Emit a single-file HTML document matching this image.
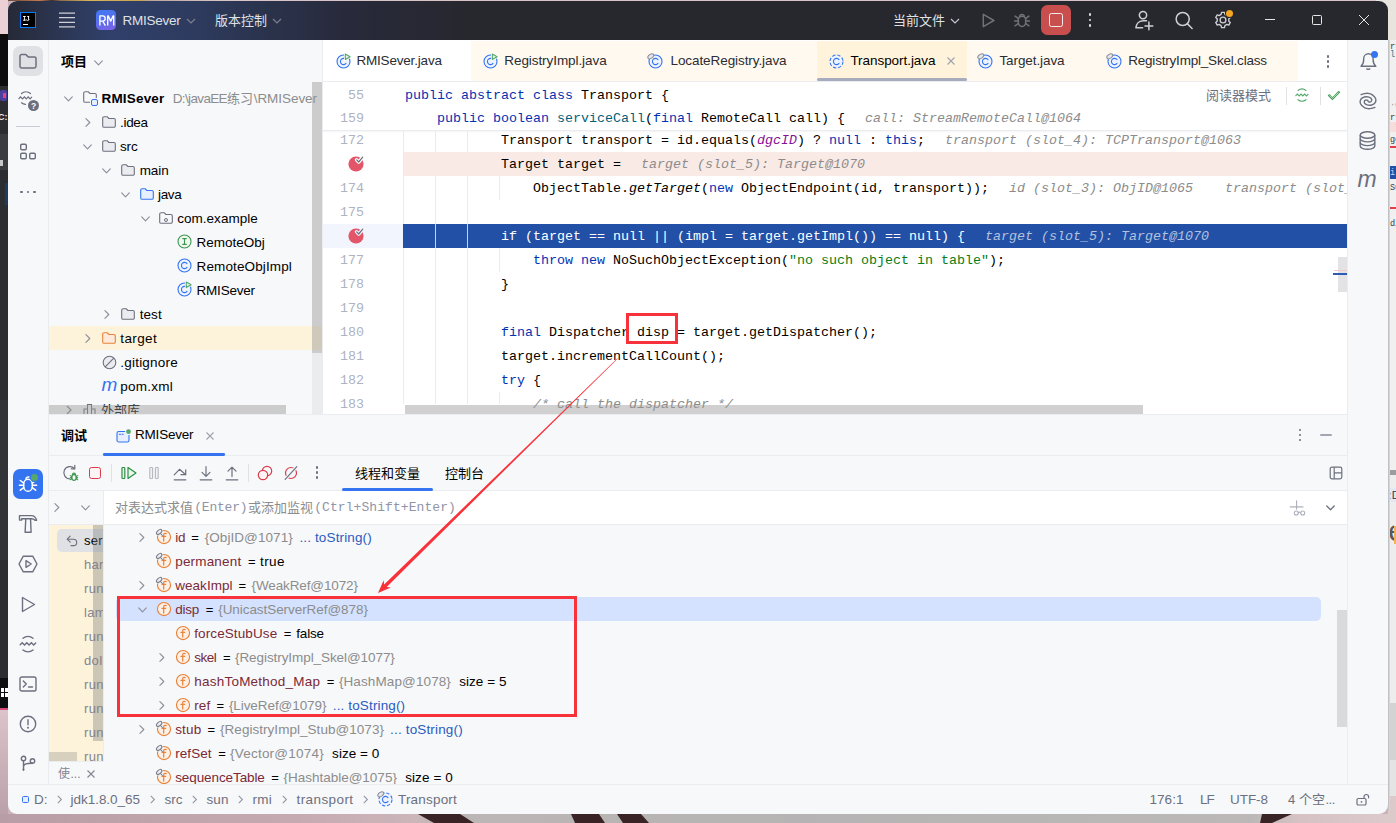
<!DOCTYPE html>
<html><head><meta charset="utf-8">
<title>RMISever - Transport.java</title>
<style>
*{box-sizing:border-box;margin:0;padding:0}
html,body{width:1396px;height:823px;overflow:hidden}
body{position:relative;background:#c9b2b8;font-family:"Liberation Sans","Noto Sans CJK SC",sans-serif;font-size:13px;color:#000}
.abs{position:absolute}
svg{overflow:visible}
.t{position:absolute;white-space:pre}
.ui{font-family:"Liberation Sans","Noto Sans CJK SC",sans-serif;font-size:13px}
.b{font-weight:bold}
.mono{font-family:"Liberation Mono",monospace;font-size:13.333px}
.kw{color:#0033b3}.fn{color:#00627a}.hint{color:#8c8c8c;font-style:italic}.str{color:#067d17}.fld{color:#871094;font-style:italic}.cm{color:#8c8c8c;font-style:italic}.it{font-style:italic}
.vn{color:#7a2a37}.gv{color:#8c8c8c}.lk{color:#2a5bc0}
svg text{font-family:"Liberation Sans","Noto Sans CJK SC",sans-serif}
</style></head><body>

<!-- s_title -->
<div class="abs" style="left:0px;top:0px;width:1396px;height:1px;background:linear-gradient(90deg,#e9cdd2 0,#e9cdd2 8px,#6b4a3a 8px,#c5784f 40px,#3a3230 52px,#8a6a4a 60px,#d9b45a 90px,#caa24f 140px,#b9a59a 150px,#d8c4c6 220px,#d8c4c6 100%);"></div>
<div class="abs" style="left:0px;top:0px;width:8px;height:34px;background:#ebd0d5;"></div>
<div class="abs" style="left:0px;top:34px;width:8px;height:52px;background:#0c0c0e;"></div>
<div class="abs" style="left:0px;top:86px;width:8px;height:592px;background:#2b2d30;"></div>
<div class="abs" style="left:0px;top:134px;width:8px;height:36px;background:#3a3c40;"></div>
<div class="abs" style="left:0px;top:90px;width:7px;height:11px;background:#4b3fa0;border-radius:2px;"></div>
<div class="abs" style="left:3px;top:93px;width:3px;height:5px;background:#e0457b;"></div>
<div class="t ui b" style="left:-2px;top:111.5px;height:10px;line-height:10px;color:#e8e8e8;font-size:9px;">C:</div>
<div class="abs" style="left:0px;top:160px;width:3px;height:6px;background:#c8c8c8;"></div>
<div class="abs" style="left:5px;top:183px;width:3px;height:22px;background:#1f3a5f;"></div>
<div class="abs" style="left:0px;top:400px;width:8px;height:160px;background:#313336;"></div>
<div class="abs" style="left:0px;top:678px;width:8px;height:30px;background:#0e0e10;"></div>
<div class="abs" style="left:1px;top:688px;width:3px;height:4px;background:#fff;"></div>
<div class="abs" style="left:5px;top:688px;width:3px;height:4px;background:#fff;"></div>
<div class="abs" style="left:1px;top:693px;width:3px;height:4px;background:#fff;"></div>
<div class="abs" style="left:5px;top:693px;width:3px;height:4px;background:#fff;"></div>
<div class="abs" style="left:0px;top:708px;width:8px;height:2px;background:#d94a7c;"></div>
<div class="abs" style="left:0px;top:710px;width:8px;height:113px;background:linear-gradient(180deg,#dcc4ca,#b89da6);"></div>
<div class="abs" style="left:0px;top:814px;width:1396px;height:9px;background:linear-gradient(90deg,#b89da6 0,#c5aab1 300px,#ccb6ba 415px,#bdb6b6 440px,#b5b3b3 800px,#bcb8b8 1250px,#d6c2c5 1300px,#dccacc 100%);"></div>
<svg class="abs" style="left:0;top:814px" width="1396" height="9" viewBox="0 0 1396 9"><g fill="#3a2325"><path d="M418 0h42l14 9h-40z"/><path d="M571 0h28l6 9h-30z"/><path d="M617 0h24l8 9h-26z"/><path d="M1262 0h30l-20 9h-12z"/></g></svg>
<div class="abs" style="left:1376px;top:0px;width:20px;height:14px;background:#e8e4de;"></div>
<div class="abs" style="left:8px;top:1px;width:1380px;height:813px;background:#f7f8fa;border-radius:9px;"></div>
<div class="abs" style="left:8px;top:1px;width:1380px;height:39px;background:linear-gradient(90deg,#262a37 0px,#2c3653 52px,#30406b 100px,#2e3b5f 185px,#2a324a 265px,#28293a 345px,#27282e 460px,#27282e 100%);border-radius:9px 9px 0 0;"></div>
<div class="abs" style="left:20px;top:12px;width:16px;height:16px;background:#000;border:1px solid #087cfa;"></div>
<svg class="abs" style="left:23.0px;top:15.5px;" width="7" height="5" viewBox="0 0 7 5" fill="none"><g fill="#fff"><rect x="0" y="0" width="2.800" height="0.900"/><rect x="0.950" y="0" width="0.900" height="4.600"/><rect x="0" y="3.700" width="2.800" height="0.900"/><rect x="4.200" y="0" width="2" height="0.900"/><rect x="5.100" y="0" width="0.900" height="3.800"/><path d="M3.200 3.300c.2.900.7 1.300 1.400 1.300.9 0 1.400-.6 1.400-1.500" stroke="#fff" stroke-width="0.900" fill="none"/></g></svg>
<div class="abs" style="left:23px;top:24px;width:5px;height:1px;background:#fff;"></div>
<svg class="abs" style="left:59.0px;top:12.0px;" width="16" height="16" viewBox="0 0 16 16" fill="none"><path d="M0 1.100h16M0 5.700h16M0 10.300h16M0 14.900h16" stroke="#ced0d6" stroke-width="1.250"/></svg>
<div class="abs" style="left:96px;top:10px;width:20px;height:20px;background:linear-gradient(160deg,#3d7af2 0%,#5a6eee 50%,#8062e6 100%);border-radius:4.500px;"></div>
<svg class="abs" style="left:98.5px;top:14.7px;" width="15" height="11" viewBox="0 0 15 11" fill="none"><g stroke="#fff" stroke-width="1.350" fill="none" stroke-linejoin="round" stroke-linecap="butt"><path d="M0.900 10.600V0.900h2.700c1.700 0 2.600 1 2.600 2.600s-.9 2.600-2.600 2.600H0.900M3.700 6.200l2.700 4.400"/><path d="M8.700 10.600V0.900h.5l2.500 5.200L14.200 0.900h.5v9.700"/></g></svg>
<div class="t ui" style="left:122.4px;top:12.6px;height:16px;line-height:16px;color:#dfe1e5;font-size:13.5px;letter-spacing:-0.227px;">RMISever</div>
<svg class="abs" style="left:186.0px;top:17.5px;" width="10" height="6" viewBox="0 0 10 6" fill="none"><path d="M1 1l4 4 4-4" stroke="#7c808c" stroke-width="1.2"/></svg>
<svg class="abs" style="left:215px;top:25.14px;" width="52.0" height="1" viewBox="0 0 52.0 1"><text x="0" y="0" font-size="13" fill="#dfe1e5">版本控制</text></svg>
<svg class="abs" style="left:272.0px;top:17.5px;" width="10" height="6" viewBox="0 0 10 6" fill="none"><path d="M1 1l4 4 4-4" stroke="#7c808c" stroke-width="1.2"/></svg>
<svg class="abs" style="left:893.4px;top:25.14px;" width="52.0" height="1" viewBox="0 0 52.0 1"><text x="0" y="0" font-size="13" fill="#dfe1e5">当前文件</text></svg>
<svg class="abs" style="left:950.0px;top:18.0px;" width="10" height="6" viewBox="0 0 10 6" fill="none"><path d="M1 1l4 4 4-4" stroke="#c3c5cb" stroke-width="1.2"/></svg>
<svg class="abs" style="left:982.0px;top:12.5px;" width="13" height="15" viewBox="0 0 13 15" fill="none"><path d="M1.300 1.300v12.400l10.600-6.200z" stroke="#6e7178" stroke-width="1.450" stroke-linejoin="round" fill="none"/></svg>
<svg class="abs" style="left:1014.0px;top:12.0px;" width="16" height="16" viewBox="0 0 16 16" fill="none"><g stroke="#6e7178" stroke-width="1.550" stroke-linecap="round" fill="none"><rect x="4.300" y="4.200" width="7.400" height="10.200" rx="3.600" ry="3.900"/><path d="M5.600 4.200a2.500 2.500 0 0 1 4.800 0"/><path d="M4.200 6.400L1.100 4.100M3.900 8.900H.6M4.200 11.500l-3.100 2.300M11.800 6.400l3.100-2.300M12.100 8.900h3.300M11.800 11.500l3.100 2.300"/></g></svg>
<div class="abs" style="left:1041px;top:5px;width:30px;height:30px;background:#c94f4f;border-radius:6.500px;"></div>
<div class="abs" style="left:1049.2px;top:13.2px;width:13.6px;height:13.6px;background:transparent;border:1.700px solid #f6ebeb;border-radius:2.400px;"></div>
<div class="abs" style="left:1088.7px;top:13.399999999999999px;width:2.6px;height:2.6px;background:#dfe1e5;border-radius:50%;"></div>
<div class="abs" style="left:1088.7px;top:18.7px;width:2.6px;height:2.6px;background:#dfe1e5;border-radius:50%;"></div>
<div class="abs" style="left:1088.7px;top:24.099999999999998px;width:2.6px;height:2.6px;background:#dfe1e5;border-radius:50%;"></div>
<svg class="abs" style="left:1135.0px;top:11.0px;" width="18" height="18" viewBox="0 0 18 18" fill="none"><g stroke="#ced0d6" stroke-width="1.500" stroke-linecap="round" fill="none"><circle cx="8" cy="4.100" r="3.650"/><path d="M0.900 16.850C1.300 13.500 3.500 9.800 8 9.800H11.500M0.900 16.850H7.600"/><path d="M13.900 11v7.800M10 14.900h7.800"/></g></svg>
<svg class="abs" style="left:1174.5px;top:11.0px;" width="18" height="18" viewBox="0 0 18 18" fill="none"><g stroke="#ced0d6" stroke-width="1.500" stroke-linecap="round" fill="none"><circle cx="7.700" cy="8" r="6.550"/><path d="M12.500 12.900l4.600 4.600"/></g></svg>
<svg class="abs" style="left:1214.0px;top:11.0px;" width="18" height="18" viewBox="0 0 18 18" fill="none"><g stroke="#ced0d6" stroke-width="1.350" stroke-linejoin="round" fill="none"><path d="M10.92 3.42L10.47 1.44L7.53 1.44L7.08 3.42L5.13 4.55L3.19 3.95L1.72 6.49L3.21 7.87L3.21 10.13L1.72 11.51L3.19 14.05L5.13 13.45L7.08 14.58L7.53 16.56L10.47 16.56L10.92 14.58L12.87 13.45L14.81 14.05L16.28 11.51L14.79 10.13L14.79 7.87L16.28 6.49L14.81 3.95L12.87 4.55Z"/><circle cx="9" cy="9" r="2.900"/></g></svg>
<div class="abs" style="left:1224.7px;top:8.7px;width:9.4px;height:9.4px;background:#27282e;border-radius:50%;"></div>
<div class="abs" style="left:1225.7px;top:9.7px;width:7.4px;height:7.4px;background:#f5a623;border-radius:50%;"></div>
<div class="abs" style="left:1265px;top:19px;width:10px;height:1px;background:#e6e6e6;"></div>
<div class="abs" style="left:1312px;top:15px;width:10px;height:10px;background:transparent;border:1px solid #e6e6e6;border-radius:1.5px;"></div>
<svg class="abs" style="left:1359.0px;top:15.0px;" width="10" height="10" viewBox="0 0 10 10" fill="none"><path d="M0 0l10 10M10 0L0 10" stroke="#e6e6e6" stroke-width="1"/></svg>
<!-- s_left -->
<div class="abs" style="left:48px;top:40px;width:1px;height:744px;background:#ebecf0;"></div>
<div class="abs" style="left:13px;top:46px;width:30px;height:30px;background:#dfe1e5;border-radius:7px;"></div>
<svg class="abs" style="left:18.0px;top:53.0px;" width="20" height="16" viewBox="0 0 20 16" fill="none"><path d="M2 3.2a1.7 1.7 0 0 1 1.7-1.7h4.1l2.4 2.4h6.1a1.7 1.7 0 0 1 1.7 1.7v7.7a1.7 1.7 0 0 1-1.7 1.7H3.7A1.7 1.7 0 0 1 2 13.3z" stroke="#6c707e" stroke-width="1.5" stroke-linejoin="round"/></svg>
<svg class="abs" style="left:18.0px;top:90.0px;" width="18" height="16" viewBox="0 0 18 16" fill="none"><g stroke="#6c707e" stroke-width="1.2" stroke-linecap="round"><path d="M3.5 3.5a7 7 0 0 1 9 0"/><path d="M1 8.5l1.6-1.6 1.9 1.9 1.9-1.9 1.9 1.9 1.9-1.9 1.9 1.9 1.6-1.6"/><path d="M3.5 12.8a7 7 0 0 0 4 1.6"/></g></svg>
<div class="abs" style="left:28px;top:100.3px;width:11px;height:11px;background:#6c707e;border-radius:50%;"></div>
<div class="t ui b" style="left:31.1px;top:101.0px;height:10px;line-height:10px;color:#fff;font-size:8.5px;">?</div>
<div class="abs" style="left:16px;top:126px;width:24px;height:1px;background:#c9ccd6;"></div>
<svg class="abs" style="left:19.0px;top:143.0px;" width="18" height="18" viewBox="0 0 18 18" fill="none"><g stroke="#6c707e" stroke-width="1.4"><rect x="1.7" y="1.2" width="5.6" height="5.6" rx="1.2"/><rect x="1.7" y="10.2" width="5.6" height="5.6" rx="1.2"/><rect x="10.7" y="10.2" width="5.6" height="5.6" rx="1.2"/></g></svg>
<div class="abs" style="left:20.3px;top:190.8px;width:2.6px;height:2.6px;background:#6c707e;border-radius:50%;"></div>
<div class="abs" style="left:26.7px;top:190.8px;width:2.6px;height:2.6px;background:#6c707e;border-radius:50%;"></div>
<div class="abs" style="left:33.1px;top:190.8px;width:2.6px;height:2.6px;background:#6c707e;border-radius:50%;"></div>
<div class="abs" style="left:13px;top:469px;width:30px;height:30px;background:#3574f0;border-radius:7px;"></div>
<svg class="abs" style="left:19.0px;top:476.0px;" width="18" height="18" viewBox="0 0 18 18" fill="none"><g stroke="#fff" stroke-width="1.500" stroke-linecap="round" fill="none"><rect x="4.700" y="3.300" width="8.600" height="12" rx="4.300" ry="4.900"/><path d="M6.900 3.200c.2-1.600 1.400-2.400 3-2.200"/><path d="M4.700 7.200L1.300 4.500M4.600 9.200H.4M4.700 11.600l-3.400 2.600M13.300 7.200l3.400-2.700M13.400 9.200h4.200M13.300 11.600l3.400 2.600"/></g></svg>
<div class="abs" style="left:30.2px;top:473.2px;width:8.6px;height:8.6px;background:#3574f0;border-radius:50%;"></div>
<div class="abs" style="left:31px;top:474px;width:7px;height:7px;background:#55a76a;border-radius:50%;"></div>
<svg class="abs" style="left:18.0px;top:514.0px;" width="20" height="20" viewBox="0 0 20 20" fill="none"><g stroke="#6c707e" stroke-width="1.400" stroke-linejoin="round" fill="none"><path d="M1.500 1.600H13.300C16 1.600 17.900 3.700 18.600 6.300L17 6.200C16.100 5.200 15 4.700 13.500 4.700H3.700V6.100H1.500Z"/><path d="M7.700 5v1.500L7.100 18.300h6l-.5-11.800V5"/></g></svg>
<svg class="abs" style="left:18.0px;top:555.0px;" width="20" height="18" viewBox="0 0 20 18" fill="none"><g stroke="#6c707e" stroke-width="1.4" stroke-linejoin="round"><path d="M5.3 1.2h9.400L19 9l-4.300 7.800H5.300L1 9z"/><path d="M8 5.700v6.600L13.200 9z"/></g></svg>
<svg class="abs" style="left:21.0px;top:595.5px;" width="15" height="17" viewBox="0 0 15 17" fill="none"><path d="M1.5 1.500v14l12-7z" stroke="#6c707e" stroke-width="1.4" stroke-linejoin="round"/></svg>
<svg class="abs" style="left:19.0px;top:635.0px;" width="18" height="18" viewBox="0 0 18 18" fill="none"><g stroke="#6c707e" stroke-width="1.4" stroke-linecap="round"><path d="M4 3.200a8 8 0 0 1 10 0"/><path d="M1.200 9.800l2-2 2.300 2.300 2.300-2.300 2.300 2.300 2.300-2.300 2.300 2.300 2-2"/><path d="M4 15a8 8 0 0 0 10 0"/></g></svg>
<svg class="abs" style="left:19.0px;top:676.0px;" width="18" height="16" viewBox="0 0 18 16" fill="none"><g stroke="#6c707e" stroke-width="1.400" stroke-linecap="round" stroke-linejoin="round"><rect x="1" y="1" width="16" height="14" rx="1.800"/><path d="M4.300 5l3 3-3 3M9.500 11h4"/></g></svg>
<svg class="abs" style="left:19.0px;top:715.0px;" width="18" height="18" viewBox="0 0 18 18" fill="none"><g stroke="#6c707e" stroke-width="1.400" stroke-linecap="round"><circle cx="9" cy="9" r="7.700"/><path d="M9 4.800v5"/></g><circle cx="9" cy="12.800" r="1" fill="#6c707e"/></svg>
<svg class="abs" style="left:19.0px;top:755.0px;" width="18" height="18" viewBox="0 0 18 18" fill="none"><g stroke="#6c707e" stroke-width="1.400" stroke-linecap="round"><circle cx="4.500" cy="3.500" r="2.200"/><circle cx="13.500" cy="6" r="2.200"/><circle cx="4.500" cy="14.500" r="0.300"/><path d="M4.500 5.700v9.500M4.500 12c0-2.500 2-3.300 4.500-3.500 2.500-.2 4.500-.3 4.500-.3"/></g></svg>
<!-- s_project -->
<svg class="abs" style="left:61px;top:66.44px;" width="26.0" height="1" viewBox="0 0 26.0 1"><text x="0" y="0" font-size="13" font-weight="bold" fill="#000">项目</text></svg>
<svg class="abs" style="left:93.5px;top:59.5px;" width="9" height="6" viewBox="0 0 9 6" fill="none"><path d="M0.700 0.900l3.800 3.900 3.800-3.900" stroke="#8d909c" stroke-width="1.150" stroke-linecap="round" stroke-linejoin="round"/></svg>
<div class="abs" style="left:49px;top:326px;width:274px;height:24px;background:#fdf3da;"></div>
<svg class="abs" style="left:64.3px;top:95.5px;" width="9" height="6" viewBox="0 0 9 6" fill="none"><path d="M0.700 0.900l3.800 3.900 3.800-3.900" stroke="#8d909c" stroke-width="1.150" stroke-linecap="round" stroke-linejoin="round"/></svg>
<svg class="abs" style="left:82.5px;top:91.2px;" width="14" height="12" viewBox="0 0 14 12" fill="none"><path d="M.7 2.100A1.400 1.400 0 0 1 2.100.7h3l1.800 1.800h5a1.400 1.400 0 0 1 1.400 1.400v6a1.400 1.400 0 0 1-1.400 1.400H2.100a1.400 1.400 0 0 1-1.400-1.400z" stroke="#6c707e" fill="#f7f8fa" stroke-width="1.100" stroke-linejoin="round"/></svg>
<div class="abs" style="left:90px;top:98px;width:8.5px;height:8.5px;background:#f7f8fa;"></div>
<div class="abs" style="left:91px;top:99px;width:7.2px;height:7px;background:#e7efff;border:1.200px solid #3574f0;border-radius:2px;"></div>
<div class="t ui b" style="left:101.5px;top:90.6px;height:16px;line-height:16px;color:#000;font-size:13.5px;letter-spacing:0.184px;">RMISever</div>
<div class="abs" style="left:49px;top:86px;width:273px;height:24px;overflow:hidden"><div class="abs" style="left:-49px;top:-86px;width:400px;height:200px"><div class="t ui" style="left:172.7px;top:90.6px;height:16px;line-height:16px;color:#8c8c8c;font-size:13.5px;letter-spacing:-0.636px;">D:\javaEE</div><svg class="abs" style="left:227.2px;top:103.24px;" width="26.0" height="1" viewBox="0 0 26.0 1"><text x="0" y="0" font-size="13" fill="#8c8c8c">练习</text></svg><div class="t ui" style="left:253.7px;top:90.6px;height:16px;line-height:16px;color:#8c8c8c;font-size:13.5px;letter-spacing:-0.052px;">\RMISever</div></div></div>
<svg class="abs" style="left:84.7px;top:117.5px;" width="6" height="9" viewBox="0 0 6 9" fill="none"><path d="M0.900 0.700l3.900 3.800-3.900 3.800" stroke="#8d909c" stroke-width="1.150" stroke-linecap="round" stroke-linejoin="round"/></svg>
<svg class="abs" style="left:101.8px;top:115.7px;" width="14" height="12" viewBox="0 0 14 12" fill="none"><path d="M.7 2.100A1.400 1.400 0 0 1 2.100.7h3l1.800 1.800h5a1.400 1.400 0 0 1 1.400 1.400v6a1.400 1.400 0 0 1-1.400 1.400H2.100a1.400 1.400 0 0 1-1.400-1.400z" stroke="#6c707e" fill="#ebecf0" stroke-width="1.100" stroke-linejoin="round"/></svg>
<div class="t ui" style="left:120px;top:114.6px;height:16px;line-height:16px;font-size:13.5px;letter-spacing:-0.295px;">.idea</div>
<svg class="abs" style="left:83.2px;top:143.5px;" width="9" height="6" viewBox="0 0 9 6" fill="none"><path d="M0.700 0.900l3.800 3.900 3.800-3.900" stroke="#8d909c" stroke-width="1.150" stroke-linecap="round" stroke-linejoin="round"/></svg>
<svg class="abs" style="left:101.8px;top:139.7px;" width="14" height="12" viewBox="0 0 14 12" fill="none"><path d="M.7 2.100A1.400 1.400 0 0 1 2.100.7h3l1.800 1.800h5a1.400 1.400 0 0 1 1.400 1.400v6a1.400 1.400 0 0 1-1.400 1.400H2.100a1.400 1.400 0 0 1-1.400-1.400z" stroke="#6c707e" fill="#ebecf0" stroke-width="1.100" stroke-linejoin="round"/></svg>
<div class="t ui" style="left:120px;top:138.6px;height:16px;line-height:16px;font-size:13.5px;letter-spacing:-0.132px;">src</div>
<svg class="abs" style="left:102.4px;top:167.5px;" width="9" height="6" viewBox="0 0 9 6" fill="none"><path d="M0.700 0.900l3.800 3.900 3.800-3.900" stroke="#8d909c" stroke-width="1.150" stroke-linecap="round" stroke-linejoin="round"/></svg>
<svg class="abs" style="left:121.0px;top:163.7px;" width="14" height="12" viewBox="0 0 14 12" fill="none"><path d="M.7 2.100A1.400 1.400 0 0 1 2.100.7h3l1.800 1.800h5a1.400 1.400 0 0 1 1.400 1.400v6a1.400 1.400 0 0 1-1.400 1.400H2.100a1.400 1.400 0 0 1-1.400-1.400z" stroke="#6c707e" fill="#ebecf0" stroke-width="1.100" stroke-linejoin="round"/></svg>
<div class="t ui" style="left:139.7px;top:162.6px;height:16px;line-height:16px;font-size:13.5px;letter-spacing:-0.091px;">main</div>
<svg class="abs" style="left:121.4px;top:191.5px;" width="9" height="6" viewBox="0 0 9 6" fill="none"><path d="M0.700 0.900l3.800 3.900 3.800-3.900" stroke="#8d909c" stroke-width="1.150" stroke-linecap="round" stroke-linejoin="round"/></svg>
<svg class="abs" style="left:140.0px;top:187.7px;" width="14" height="12" viewBox="0 0 14 12" fill="none"><path d="M.7 2.100A1.400 1.400 0 0 1 2.100.7h3l1.800 1.800h5a1.400 1.400 0 0 1 1.400 1.400v6a1.400 1.400 0 0 1-1.400 1.400H2.100a1.400 1.400 0 0 1-1.400-1.400z" stroke="#3574f0" fill="#e7efff" stroke-width="1.100" stroke-linejoin="round"/></svg>
<div class="t ui" style="left:158px;top:186.6px;height:16px;line-height:16px;font-size:13.5px;letter-spacing:-0.317px;">java</div>
<svg class="abs" style="left:140.5px;top:215.5px;" width="9" height="6" viewBox="0 0 9 6" fill="none"><path d="M0.700 0.900l3.800 3.900 3.800-3.900" stroke="#8d909c" stroke-width="1.150" stroke-linecap="round" stroke-linejoin="round"/></svg>
<svg class="abs" style="left:159.2px;top:211.7px;" width="14" height="12" viewBox="0 0 14 12" fill="none"><path d="M.7 2.100A1.400 1.400 0 0 1 2.100.7h3l1.800 1.800h5a1.400 1.400 0 0 1 1.400 1.400v6a1.400 1.400 0 0 1-1.400 1.400H2.100a1.400 1.400 0 0 1-1.400-1.400z" stroke="#6c707e" fill="#f7f8fa" stroke-width="1.100" stroke-linejoin="round"/></svg>
<div class="abs" style="left:164px;top:217.5px;width:4px;height:4px;background:transparent;border:1.100px solid #6c707e;border-radius:50%;"></div>
<div class="t ui" style="left:177.3px;top:210.6px;height:16px;line-height:16px;font-size:13.5px;letter-spacing:0.011px;">com.example</div>
<svg class="abs" style="left:177.0px;top:234.0px;" width="15" height="15" viewBox="0 0 15 15" fill="none"><circle cx="7.500" cy="7.500" r="6.500" stroke="#3f9651" fill="#eef8ef" stroke-width="1.100"/><path d="M5.700 4.600h3.600M5.700 10.400h3.600M7.500 4.600v5.800" stroke="#3f9651" stroke-width="1.100" stroke-linecap="round"/></svg>
<div class="t ui" style="left:196.5px;top:234.6px;height:16px;line-height:16px;font-size:13.5px;letter-spacing:0.002px;">RemoteObj</div>
<svg class="abs" style="left:177.0px;top:258.0px;" width="15" height="15" viewBox="0 0 15 15" fill="none"><circle cx="7.500" cy="7.500" r="6.500" stroke="#3574f0" fill="#edf3ff" stroke-width="1.100"/><path d="M10 5.600a3.100 3.100 0 1 0 0 3.800" stroke="#3574f0" stroke-width="1.100" stroke-linecap="round" fill="none"/></svg>
<div class="t ui" style="left:196.5px;top:258.6px;height:16px;line-height:16px;font-size:13.5px;letter-spacing:0.132px;">RemoteObjImpl</div>
<svg class="abs" style="left:177.0px;top:282.0px;" width="15" height="15" viewBox="0 0 15 15" fill="none"><circle cx="7.500" cy="7.500" r="6.500" stroke="#3574f0" fill="#edf3ff" stroke-width="1.100"/><path d="M10 5.600a3.100 3.100 0 1 0 0 3.800" stroke="#3574f0" stroke-width="1.100" stroke-linecap="round" fill="none"/><path d="M8.800 -0.800v7.200l6.200-3.600z" fill="#f7f8fa" stroke="#f7f8fa" stroke-width="1.600" stroke-linejoin="round"/><path d="M9.300 0v5.600l4.800-2.800z" fill="#e4f5e7" stroke="#55a76a" stroke-width="1.100" stroke-linejoin="round"/></svg>
<div class="t ui" style="left:196.5px;top:282.6px;height:16px;line-height:16px;font-size:13.5px;letter-spacing:-0.202px;">RMISever</div>
<svg class="abs" style="left:103.9px;top:309.5px;" width="6" height="9" viewBox="0 0 6 9" fill="none"><path d="M0.900 0.700l3.900 3.800-3.900 3.800" stroke="#8d909c" stroke-width="1.150" stroke-linecap="round" stroke-linejoin="round"/></svg>
<svg class="abs" style="left:121.0px;top:307.7px;" width="14" height="12" viewBox="0 0 14 12" fill="none"><path d="M.7 2.100A1.400 1.400 0 0 1 2.100.7h3l1.800 1.800h5a1.400 1.400 0 0 1 1.400 1.400v6a1.400 1.400 0 0 1-1.400 1.400H2.100a1.400 1.400 0 0 1-1.400-1.400z" stroke="#6c707e" fill="#ebecf0" stroke-width="1.100" stroke-linejoin="round"/></svg>
<div class="t ui" style="left:139.7px;top:306.6px;height:16px;line-height:16px;font-size:13.5px;letter-spacing:0.060px;">test</div>
<svg class="abs" style="left:84.7px;top:333.5px;" width="6" height="9" viewBox="0 0 6 9" fill="none"><path d="M0.900 0.700l3.900 3.800-3.900 3.800" stroke="#8d909c" stroke-width="1.150" stroke-linecap="round" stroke-linejoin="round"/></svg>
<svg class="abs" style="left:101.8px;top:331.7px;" width="14" height="12" viewBox="0 0 14 12" fill="none"><path d="M.7 2.100A1.400 1.400 0 0 1 2.100.7h3l1.800 1.800h5a1.400 1.400 0 0 1 1.400 1.400v6a1.400 1.400 0 0 1-1.400 1.400H2.100a1.400 1.400 0 0 1-1.400-1.400z" stroke="#e8833a" fill="#fdeadb" stroke-width="1.100" stroke-linejoin="round"/></svg>
<div class="t ui" style="left:120.3px;top:330.6px;height:16px;line-height:16px;font-size:13.5px;letter-spacing:0.363px;">target</div>
<svg class="abs" style="left:101.7px;top:354.5px;" width="15" height="15" viewBox="0 0 15 15" fill="none"><circle cx="7.500" cy="7.500" r="6.300" stroke="#6c707e" fill="#ebecf0" stroke-width="1.100"/><path d="M3.200 11.800l8.600-8.600" stroke="#6c707e" stroke-width="1.100"/></svg>
<div class="t ui" style="left:120.3px;top:354.6px;height:16px;line-height:16px;font-size:13.5px;letter-spacing:0.206px;">.gitignore</div>
<div class="t ui" style="left:101.5px;top:375.0px;height:20px;line-height:20px;color:#3574f0;font-style:italic;font-size:19px;font-family:'Liberation Sans',sans-serif;">m</div>
<div class="t ui" style="left:120.3px;top:378.6px;height:16px;line-height:16px;font-size:13.5px;letter-spacing:0.227px;">pom.xml</div>
<div class="abs" style="left:49px;top:398px;width:263px;height:16px;overflow:hidden"><svg class="abs" style="left:17px;top:7px" width="6" height="10" viewBox="0 0 6 10" fill="none"><path d="M1 1l4 4-4 4" stroke="#818594" stroke-width="1.200"/></svg><svg class="abs" style="left:34px;top:5px" width="14" height="14" viewBox="0 0 14 14" fill="none"><path d="M1 13V6h3.500v7M4.500 13V1.500h4V13M8.500 13V6H12v7M0 13h14" stroke="#6c707e" stroke-width="1.100"/></svg><svg class="abs" style="left:52px;top:17.24px;" width="39.0" height="1" viewBox="0 0 39.0 1"><text x="0" y="0" font-size="13" fill="#000">外部库</text></svg></div>
<div class="abs" style="left:312px;top:82px;width:11px;height:271px;background:rgba(150,150,150,0.45);"></div>
<div class="abs" style="left:312px;top:353px;width:11px;height:61px;background:rgba(200,200,205,0.25);"></div>
<div class="abs" style="left:49px;top:404.5px;width:237px;height:9.5px;background:rgba(150,150,150,0.45);"></div>
<div class="abs" style="left:49px;top:414px;width:1299px;height:1px;background:#ebecf0;"></div>
<div class="abs" style="left:322px;top:40px;width:1px;height:374px;background:#ebecf0;"></div>
<!-- s_editor -->
<div class="abs" style="left:323px;top:40px;width:1025px;height:374px;background:#fff;"></div>
<div class="abs" style="left:471px;top:41px;width:827px;height:40px;background:#fff9ef;"></div>
<div class="abs" style="left:817px;top:41px;width:150px;height:40px;background:#fff4db;"></div>
<div class="abs" style="left:323px;top:81px;width:1025px;height:1px;background:#ebecf0;"></div>
<div class="abs" style="left:817px;top:78px;width:150px;height:3px;background:#a6abbd;border-radius:2px;"></div>
<svg class="abs" style="left:335.8px;top:53.5px;" width="15" height="15" viewBox="0 0 15 15" fill="none"><circle cx="7.500" cy="7.500" r="6.500" stroke="#3574f0" fill="#edf3ff" stroke-width="1.100"/><path d="M10 5.600a3.100 3.100 0 1 0 0 3.800" stroke="#3574f0" stroke-width="1.100" stroke-linecap="round" fill="none"/><path d="M8.800 -0.800v7.200l6.200-3.600z" fill="#fff" stroke="#fff" stroke-width="1.600" stroke-linejoin="round"/><path d="M9.300 0v5.600l4.800-2.800z" fill="#e4f5e7" stroke="#55a76a" stroke-width="1.100" stroke-linejoin="round"/></svg>
<div class="t ui" style="left:356.4px;top:53.2px;height:16px;line-height:16px;color:#2b2d33;font-size:13.5px;letter-spacing:-0.184px;">RMISever.java</div>
<svg class="abs" style="left:482.7px;top:53.5px;" width="15" height="15" viewBox="0 0 15 15" fill="none"><circle cx="7.500" cy="7.500" r="6.500" stroke="#3574f0" fill="#edf3ff" stroke-width="1.100"/><path d="M10 5.600a3.100 3.100 0 1 0 0 3.800" stroke="#3574f0" stroke-width="1.100" stroke-linecap="round" fill="none"/><path d="M8.800 -0.800v7.200l6.200-3.600z" fill="#fff" stroke="#fff" stroke-width="1.600" stroke-linejoin="round"/><path d="M9.300 0v5.600l4.800-2.800z" fill="#e4f5e7" stroke="#55a76a" stroke-width="1.100" stroke-linejoin="round"/></svg>
<div class="t ui" style="left:504.3px;top:53.2px;height:16px;line-height:16px;color:#2b2d33;font-size:13.5px;letter-spacing:-0.073px;">RegistryImpl.java</div>
<svg class="abs" style="left:648.2px;top:53.5px;" width="15" height="15" viewBox="0 0 15 15" fill="none"><circle cx="7.500" cy="7.500" r="6.500" stroke="#3574f0" fill="#edf3ff" stroke-width="1.100"/><path d="M10 5.600a3.100 3.100 0 1 0 0 3.800" stroke="#3574f0" stroke-width="1.100" stroke-linecap="round" fill="none"/><ellipse cx="2.800" cy="2.300" rx="3.300" ry="2" transform="rotate(-35 2.800 2.300)" fill="#e6e7ea" stroke="#8a8d96" stroke-width="1"/></svg>
<div class="t ui" style="left:670.5px;top:53.2px;height:16px;line-height:16px;color:#2b2d33;font-size:13.5px;letter-spacing:-0.082px;">LocateRegistry.java</div>
<svg class="abs" style="left:829.2px;top:53.5px;" width="15" height="15" viewBox="0 0 15 15" fill="none"><circle cx="7.500" cy="7.500" r="6.500" stroke="#3574f0" fill="#edf3ff" stroke-width="1.100" stroke-dasharray="3.300 1.800"/><path d="M10 5.600a3.100 3.100 0 1 0 0 3.800" stroke="#3574f0" stroke-width="1.100" stroke-linecap="round" fill="none"/></svg>
<div class="t ui" style="left:850.4px;top:53.2px;height:16px;line-height:16px;color:#000;font-size:13.5px;letter-spacing:-0.049px;">Transport.java</div>
<svg class="abs" style="left:977.9px;top:53.5px;" width="15" height="15" viewBox="0 0 15 15" fill="none"><circle cx="7.500" cy="7.500" r="6.500" stroke="#3574f0" fill="#edf3ff" stroke-width="1.100"/><path d="M10 5.600a3.100 3.100 0 1 0 0 3.800" stroke="#3574f0" stroke-width="1.100" stroke-linecap="round" fill="none"/><ellipse cx="2.800" cy="2.300" rx="3.300" ry="2" transform="rotate(-35 2.800 2.300)" fill="#e6e7ea" stroke="#8a8d96" stroke-width="1"/></svg>
<div class="t ui" style="left:999.4px;top:53.2px;height:16px;line-height:16px;color:#2b2d33;font-size:13.5px;letter-spacing:-0.085px;">Target.java</div>
<svg class="abs" style="left:1107.2px;top:53.5px;" width="15" height="15" viewBox="0 0 15 15" fill="none"><circle cx="7.500" cy="7.500" r="6.500" stroke="#3574f0" fill="#edf3ff" stroke-width="1.100"/><path d="M10 5.600a3.100 3.100 0 1 0 0 3.800" stroke="#3574f0" stroke-width="1.100" stroke-linecap="round" fill="none"/><ellipse cx="2.800" cy="2.300" rx="3.300" ry="2" transform="rotate(-35 2.800 2.300)" fill="#e6e7ea" stroke="#8a8d96" stroke-width="1"/></svg>
<div class="t ui" style="left:1128.2px;top:53.2px;height:16px;line-height:16px;color:#2b2d33;font-size:13.5px;letter-spacing:-0.200px;">RegistryImpl_Skel.class</div>
<svg class="abs" style="left:946.7px;top:56.8px;" width="8" height="8" viewBox="0 0 8 8" fill="none"><path d="M.5.5l7 7M7.500.5l-7 7" stroke="#9ea2ad" stroke-width="1.100"/></svg>
<div class="abs" style="left:1326.7px;top:55.4px;width:2.2px;height:2.2px;background:#6c707e;border-radius:50%;"></div>
<div class="abs" style="left:1326.7px;top:60.4px;width:2.2px;height:2.2px;background:#6c707e;border-radius:50%;"></div>
<div class="abs" style="left:1326.7px;top:65.4px;width:2.2px;height:2.2px;background:#6c707e;border-radius:50%;"></div>
<svg class="abs" style="left:1206px;top:99.94px;" width="65.0" height="1" viewBox="0 0 65.0 1"><text x="0" y="0" font-size="13" fill="#6c707e">阅读器模式</text></svg>
<div class="abs" style="left:1285.5px;top:87px;width:1px;height:18px;background:#dfe1e5;"></div>
<div class="abs" style="left:1319.5px;top:87px;width:1px;height:18px;background:#dfe1e5;"></div>
<svg class="abs" style="left:1295.3px;top:88.0px;" width="14" height="14" viewBox="0 0 14 14" fill="none"><g stroke="#55a76a" stroke-width="1.100" stroke-linecap="round" fill="none"><path d="M3 2.500a6.500 6.500 0 0 1 8 0"/><path d="M.8 7.600l1.600-1.500 1.800 1.800 1.800-1.800 1.800 1.800 1.800-1.800 1.800 1.800 1.600-1.500"/><path d="M3 11.700a6.500 6.500 0 0 0 8 0"/></g></svg>
<svg class="abs" style="left:1328.0px;top:90.8px;" width="12" height="9" viewBox="0 0 12 9" fill="none"><path d="M1.300 4.600l3.100 3.100L10.700 1.300" stroke="#3f9b55" stroke-width="2.300" stroke-linecap="square" fill="none"/><path d="M1.600 4.700l2.800 2.700L10.300 1.800" stroke="#e4f5e7" stroke-width="0.700" stroke-linecap="square" fill="none"/></svg>
<div class="abs" style="left:323px;top:130px;width:1025px;height:1px;background:#ebecf0;"></div>
<div class="abs" style="left:323px;top:131px;width:1025px;height:2px;background:linear-gradient(180deg,rgba(0,0,0,0.045),rgba(0,0,0,0));"></div>
<div class="t mono" style="left:323px;width:41px;text-align:right;top:86.5px;height:17px;line-height:17px;color:#aeb3c2">55</div>
<div class="t mono" style="left:323px;width:41px;text-align:right;top:110.0px;height:17px;line-height:17px;color:#aeb3c2">159</div>
<div class="t mono" style="left:405.0px;top:86.5px;height:17px;line-height:17px"><span class="kw">public abstract class</span> Transport {</div>
<div class="t mono" style="left:437.0px;top:110.0px;height:17px;line-height:17px"><span class="kw">public boolean</span> <span class="fn">serviceCall</span>(<span class="kw">final</span> RemoteCall call) {</div>
<div class="t mono hint" style="left:865px;top:110.0px;height:17px;line-height:17px;color:#8c8c8c">call: StreamRemoteCall@1064</div>
<div class="abs" style="left:403px;top:152px;width:944px;height:24px;background:#faeae6;"></div>
<div class="abs" style="left:323px;top:224px;width:80px;height:24px;background:#f2f5fd;"></div>
<div class="abs" style="left:403px;top:224px;width:944px;height:24px;background:#2150a6;"></div>
<div class="abs" style="left:403px;top:131px;width:1px;height:273px;background:#ebecf0;"></div>
<div class="abs" style="left:435px;top:131px;width:1px;height:273px;background:#ebecf0;"></div>
<div class="abs" style="left:467px;top:131px;width:1px;height:273px;background:#ebecf0;"></div>
<div class="abs" style="left:499px;top:176px;width:1px;height:24px;background:#ebecf0;"></div>
<div class="abs" style="left:499px;top:248px;width:1px;height:24px;background:#ebecf0;"></div>
<div class="abs" style="left:499px;top:392px;width:1px;height:12px;background:#ebecf0;"></div>
<div class="abs" style="left:403px;top:224px;width:1px;height:24px;background:#2150a6;"></div>
<div class="abs" style="left:435px;top:224px;width:1px;height:24px;background:#c9d3ea;"></div>
<div class="abs" style="left:467px;top:224px;width:1px;height:24px;background:#c9d3ea;"></div>
<div class="t mono" style="left:323px;width:41px;text-align:right;top:132.0px;height:17px;line-height:17px;color:#aeb3c2">172</div>
<div class="t mono" style="left:323px;width:41px;text-align:right;top:180.0px;height:17px;line-height:17px;color:#aeb3c2">174</div>
<div class="t mono" style="left:323px;width:41px;text-align:right;top:204.0px;height:17px;line-height:17px;color:#aeb3c2">175</div>
<div class="t mono" style="left:323px;width:41px;text-align:right;top:252.0px;height:17px;line-height:17px;color:#aeb3c2">177</div>
<div class="t mono" style="left:323px;width:41px;text-align:right;top:276.0px;height:17px;line-height:17px;color:#aeb3c2">178</div>
<div class="t mono" style="left:323px;width:41px;text-align:right;top:300.0px;height:17px;line-height:17px;color:#aeb3c2">179</div>
<div class="t mono" style="left:323px;width:41px;text-align:right;top:324.0px;height:17px;line-height:17px;color:#aeb3c2">180</div>
<div class="t mono" style="left:323px;width:41px;text-align:right;top:348.0px;height:17px;line-height:17px;color:#aeb3c2">181</div>
<div class="t mono" style="left:323px;width:41px;text-align:right;top:372.0px;height:17px;line-height:17px;color:#aeb3c2">182</div>
<div class="t mono" style="left:323px;width:41px;text-align:right;top:396.0px;height:17px;line-height:17px;color:#aeb3c2">183</div>
<svg class="abs" style="left:348.0px;top:154.5px;" width="16" height="18" viewBox="0 0 16 18" fill="none"><circle cx="8" cy="9" r="7.600" fill="#e35568"/><path d="M8.500 4.800l2.200 2.300 4.300-5.200" stroke="#fff" stroke-width="3.400" stroke-linecap="round" stroke-linejoin="round" fill="none"/><path d="M8.700 4.900l2 2.100 4-4.800" stroke="#6c707e" stroke-width="1.200" stroke-linecap="round" stroke-linejoin="round" fill="none"/></svg>
<svg class="abs" style="left:348.0px;top:226.5px;" width="16" height="18" viewBox="0 0 16 18" fill="none"><circle cx="8" cy="9" r="7.600" fill="#e35568"/><path d="M8.500 4.800l2.200 2.300 4.300-5.200" stroke="#f2f5fd" stroke-width="3.400" stroke-linecap="round" stroke-linejoin="round" fill="none"/><path d="M8.700 4.900l2 2.100 4-4.800" stroke="#6c707e" stroke-width="1.200" stroke-linecap="round" stroke-linejoin="round" fill="none"/></svg>
<div class="t mono" style="left:501.0px;top:132.0px;height:17px;line-height:17px">Transport transport = id.equals(<span class="fld">dgcID</span>) ? <span class="kw">null</span> : <span class="kw">this</span>;</div>
<div class="t mono hint" style="left:945px;top:132.0px;height:17px;line-height:17px;color:#8c8c8c">transport (slot_4): TCPTransport@1063</div>
<div class="t mono" style="left:501.0px;top:156.0px;height:17px;line-height:17px">Target target = </div>
<div class="t mono hint" style="left:641px;top:156.0px;height:17px;line-height:17px;color:#8c8c8c">target (slot_5): Target@1070</div>
<div class="t mono" style="left:533.0px;top:180.0px;height:17px;line-height:17px">ObjectTable.<span class="it">getTarget</span>(<span class="kw">new</span> ObjectEndpoint(id, transport));</div>
<div class="abs" style="left:1009px;top:176px;width:338px;height:24px;overflow:hidden"><div class="t mono hint" style="left:0px;top:4.0px;height:17px;line-height:17px;color:#8c8c8c">id (slot_3): ObjID@1065    transport (slot_4): TCP</div></div>
<div class="t mono" style="left:501.0px;top:228.0px;height:17px;line-height:17px;color:#fff">if (target == null || (impl = target.getImpl()) == null) {</div>
<div class="t mono hint" style="left:985px;top:228.0px;height:17px;line-height:17px;color:#b4c1df">target (slot_5): Target@1070</div>
<div class="t mono" style="left:533.0px;top:252.0px;height:17px;line-height:17px"><span class="kw">throw new</span> NoSuchObjectException(<span class="str">"no such object in table"</span>);</div>
<div class="t mono" style="left:501.0px;top:276.0px;height:17px;line-height:17px">}</div>
<div class="t mono" style="left:501.0px;top:324.0px;height:17px;line-height:17px"><span class="kw">final</span> Dispatcher disp = target.getDispatcher();</div>
<div class="t mono" style="left:501.0px;top:348.0px;height:17px;line-height:17px">target.incrementCallCount();</div>
<div class="t mono" style="left:501.0px;top:372.0px;height:17px;line-height:17px"><span class="kw">try</span> {</div>
<div class="t mono" style="left:533.0px;top:396.0px;height:17px;line-height:17px"><span class="cm">/* call the dispatcher */</span></div>
<div class="abs" style="left:405px;top:404.5px;width:738px;height:9.5px;background:rgba(150,150,150,0.45);"></div>
<div class="abs" style="left:1338px;top:257px;width:9px;height:35px;background:#e3e3e5;"></div>
<div class="abs" style="left:1334px;top:269.5px;width:13px;height:1px;background:#f3c7c7;"></div>
<div class="abs" style="left:1333px;top:272.5px;width:14px;height:2px;background:#2b5bb5;"></div>
<!-- s_right -->
<div class="abs" style="left:1347px;top:40px;width:1px;height:744px;background:#ebecf0;"></div>
<div class="abs" style="left:1388px;top:1px;width:8px;height:40px;background:#e8e4de;"></div>
<div class="abs" style="left:1388px;top:40px;width:8px;height:430px;background:#f0f0f1;"></div>
<div class="abs" style="left:1388px;top:470px;width:8px;height:5px;background:#9c9c9e;"></div>
<div class="abs" style="left:1388px;top:475px;width:8px;height:228px;background:#ededee;"></div>
<div class="abs" style="left:1388px;top:703px;width:8px;height:57px;background:#d3d3d4;"></div>
<div class="abs" style="left:1388px;top:760px;width:8px;height:36px;background:#e4e4e5;"></div>
<div class="abs" style="left:1388px;top:796px;width:8px;height:27px;background:#dccacb;"></div>
<div class="abs" style="left:1390px;top:122px;width:6px;height:10px;background:#f6dedd;"></div>
<div class="abs" style="left:1390px;top:146px;width:6px;height:2px;background:#e0404a;"></div>
<div class="abs" style="left:1390px;top:166px;width:6px;height:13px;background:#214fa6;"></div>
<div class="abs" style="left:1390px;top:207px;width:6px;height:2px;background:#e0404a;"></div>
<div class="abs" style="left:1390px;top:488px;width:6px;height:14px;background:#e3e8f2;"></div>
<div class="t mono" style="left:1390px;top:41.5px;height:10px;line-height:10px;color:#3a3a3a;font-size:8.500px;">rt</div>
<div class="t mono" style="left:1390px;top:49.5px;height:10px;line-height:10px;color:#2a7a8a;font-size:8.500px;">l(</div>
<div class="t mono" style="left:1390px;top:100.0px;height:10px;line-height:10px;color:#9a9a9a;font-size:8.500px;">·c</div>
<div class="t mono" style="left:1390px;top:112.5px;height:10px;line-height:10px;color:#3a3a3a;font-size:8.500px;">rt</div>
<div class="t mono" style="left:1390px;top:122.0px;height:10px;line-height:10px;color:#a0a0a0;font-size:8.500px;"> t</div>
<div class="t mono" style="left:1390px;top:134.5px;height:10px;line-height:10px;color:#3a3a3a;font-size:8.500px;">ge</div>
<div class="t mono" style="left:1390px;top:167.5px;height:10px;line-height:10px;color:#c9d6f2;font-size:8.500px;">il</div>
<div class="t mono" style="left:1390px;top:183.0px;height:10px;line-height:10px;color:#3a3a3a;font-size:8.500px;">Suc</div>
<div class="t mono" style="left:1390px;top:219.0px;height:10px;line-height:10px;color:#3a3a3a;font-size:8.500px;">di</div>
<div class="t ui" style="left:1388.5px;top:489.0px;height:12px;line-height:12px;color:#8a8a8a;font-size:11px;">:</div>
<div class="t ui" style="left:1391.8px;top:489.0px;height:12px;line-height:12px;color:#2f3a55;font-size:11px;">D</div>
<div class="abs" style="left:1388px;top:515px;width:5.500px;height:40px;overflow:hidden"><div class="t ui" style="left:0.3px;top:-1.5px;height:34px;line-height:34px;color:#55575c;font-size:30px;">e</div></div>
<div class="abs" style="left:1393.5px;top:526px;width:2.5px;height:18px;background:#f2b25a;"></div>
<div class="abs" style="left:1388px;top:40px;width:1.5px;height:770px;background:linear-gradient(90deg,#b8b8bb,#dededf);"></div>
<svg class="abs" style="left:1359.7px;top:51.5px;" width="17" height="18" viewBox="0 0 17 18" fill="none"><g stroke="#6c707e" stroke-width="1.400" stroke-linejoin="round" stroke-linecap="round" fill="none"><path d="M1 14.300C3 12.500 3.700 10.500 3.700 7.500V6.500a4.700 4.700 0 0 1 9.400 0v1c0 3 .7 5 2.700 6.800z"/><path d="M6.800 16.900c.9.500 2.100.500 3 0"/></g></svg>
<div class="abs" style="left:1370.6px;top:51px;width:7.4px;height:7.4px;background:#3574f0;border-radius:50%;"></div>
<svg class="abs" style="left:1359.0px;top:92.0px;" width="18" height="18" viewBox="0 0 18 18" fill="none"><path d="M2.07 2.62C2.65 2.45 4.38 1.81 5.54 1.60C6.69 1.39 7.91 1.25 9.00 1.34C10.09 1.44 11.16 1.72 12.10 2.15C13.04 2.57 13.92 3.21 14.65 3.90C15.38 4.58 16.11 5.48 16.47 6.27C16.84 7.06 16.87 7.94 16.84 8.64C16.81 9.33 16.66 9.88 16.29 10.46C15.93 11.04 15.29 11.67 14.65 12.10C14.01 12.52 13.19 12.83 12.46 13.01C11.73 13.19 11.01 13.22 10.28 13.19C9.55 13.16 8.76 13.04 8.09 12.83C7.42 12.62 6.72 12.28 6.27 11.92C5.81 11.55 5.51 11.07 5.35 10.64C5.20 10.22 5.23 9.75 5.35 9.36C5.48 8.98 5.75 8.57 6.08 8.34C6.42 8.12 6.93 8.00 7.36 8.02C7.78 8.03 8.36 8.29 8.64 8.45C8.91 8.62 8.94 8.91 9.00 9.00M15.93 15.38C15.35 15.55 13.62 16.19 12.46 16.40C11.31 16.61 10.09 16.75 9.00 16.66C7.91 16.56 6.84 16.28 5.90 15.85C4.96 15.43 4.08 14.79 3.35 14.10C2.62 13.42 1.89 12.52 1.53 11.73C1.16 10.94 1.13 10.06 1.16 9.36C1.19 8.67 1.34 8.12 1.71 7.54C2.07 6.96 2.71 6.33 3.35 5.90C3.99 5.48 4.81 5.17 5.54 4.99C6.27 4.81 6.99 4.78 7.72 4.81C8.45 4.84 9.24 4.96 9.91 5.17C10.58 5.38 11.28 5.72 11.73 6.08C12.19 6.45 12.49 6.93 12.65 7.36C12.80 7.78 12.77 8.25 12.65 8.64C12.52 9.02 12.25 9.43 11.92 9.66C11.58 9.88 11.07 10.00 10.64 9.98C10.22 9.97 9.64 9.71 9.36 9.55C9.09 9.38 9.06 9.09 9.00 9.00" stroke="#6c707e" stroke-width="1.400" stroke-linecap="round" fill="none"/></svg>
<svg class="abs" style="left:1359.4px;top:131.3px;" width="17" height="19" viewBox="0 0 17 19" fill="none"><g stroke="#6c707e" stroke-width="1.400" fill="none"><ellipse cx="8.500" cy="4" rx="7.300" ry="3.200"/><path d="M1.200 4v11c0 1.800 3.300 3.200 7.300 3.200s7.300-1.400 7.300-3.200V4"/><path d="M1.200 7.700c0 1.800 3.300 3.200 7.300 3.200s7.300-1.400 7.300-3.200M1.200 11.400c0 1.800 3.300 3.200 7.300 3.200s7.300-1.400 7.300-3.200"/></g></svg>
<div class="t ui" style="left:1357.6px;top:166.0px;height:26px;line-height:26px;color:#6c707e;font-style:italic;font-size:23px;">m</div>
<!-- s_debug -->
<svg class="abs" style="left:61px;top:440.24px;" width="26.0" height="1" viewBox="0 0 26.0 1"><text x="0" y="0" font-size="13" font-weight="bold" fill="#000">调试</text></svg>
<svg class="abs" style="left:115.5px;top:428.5px;" width="15" height="14" viewBox="0 0 15 14" fill="none"><rect x="1" y="2.500" width="12" height="10.500" rx="1.800" stroke="#3574f0" fill="#e7efff" stroke-width="1.100"/><path d="M3.300 5.300h1.200M6 5.300h1.200" stroke="#3574f0" stroke-width="1.100" stroke-linecap="round"/><circle cx="12.500" cy="2.700" r="3.300" fill="#f7f8fa"/><circle cx="12.500" cy="2.700" r="2.400" fill="#55a76a"/></svg>
<div class="t ui" style="left:135px;top:427.3px;height:16px;line-height:16px;color:#000;font-size:13.5px;letter-spacing:-0.202px;">RMISever</div>
<svg class="abs" style="left:205.7px;top:431.5px;" width="8" height="8" viewBox="0 0 8 8" fill="none"><path d="M.5.500l7 7M7.500.500l-7 7" stroke="#9ea2ad" stroke-width="1.100"/></svg>
<div class="abs" style="left:103px;top:453px;width:122px;height:3px;background:#3574f0;border-radius:2px;"></div>
<div class="abs" style="left:49px;top:455px;width:1298px;height:1px;background:#ebecf0;"></div>
<div class="abs" style="left:103px;top:453px;width:122px;height:3px;background:#3574f0;border-radius:2px;"></div>
<div class="abs" style="left:1298.6px;top:428.9px;width:2.2px;height:2.2px;background:#6c707e;border-radius:50%;"></div>
<div class="abs" style="left:1298.6px;top:433.9px;width:2.2px;height:2.2px;background:#6c707e;border-radius:50%;"></div>
<div class="abs" style="left:1298.6px;top:438.9px;width:2.2px;height:2.2px;background:#6c707e;border-radius:50%;"></div>
<div class="abs" style="left:1319.5px;top:434.2px;width:12.8px;height:1.6px;background:#a3a6b1;border-radius:1px;"></div>
<svg class="abs" style="left:60.5px;top:463.5px;" width="18" height="18" viewBox="0 0 18 18" fill="none"><g fill="none" stroke="#6c707e" stroke-width="1.200" stroke-linecap="round" stroke-linejoin="round"><path d="M13.500 4.500A6.200 6.200 0 1 0 9 15"/><path d="M13.800 1.300v3.500h-3.500"/></g><g fill="none" stroke="#3f9651" stroke-width="1.100" stroke-linecap="round"><ellipse cx="13" cy="13.500" rx="2.200" ry="2.900"/><path d="M11.500 10.600a1.500 1.500 0 0 1 3 0M10.800 12.500l-1.500-.9M10.800 14.800l-1.500.9M15.200 12.500l1.500-.9M15.200 14.800l1.500.9M10.800 13.600H9.300M15.200 13.600h1.500"/></g></svg>
<div class="abs" style="left:89px;top:466.9px;width:12px;height:12px;background:#fff4f4;border:1.300px solid #db3b4b;border-radius:2.500px;"></div>
<div class="abs" style="left:111px;top:463.5px;width:1px;height:18px;background:#dfe1e5;"></div>
<svg class="abs" style="left:120.8px;top:465.9px;" width="16" height="14" viewBox="0 0 16 14" fill="none"><g fill="#e9f7ec" stroke="#2a8f43" stroke-width="1.200" stroke-linejoin="round"><rect x="1" y="1.500" width="2.800" height="11" rx="0.700"/><path d="M7 1.500v11l8-5.500z"/></g></svg>
<svg class="abs" style="left:149.0px;top:465.5px;" width="10" height="14" viewBox="0 0 10 14" fill="none"><g fill="#f1f2f4" stroke="#b4b8bf" stroke-width="1.100"><rect x="0.800" y="1.500" width="2.800" height="11" rx="0.700"/><rect x="6.400" y="1.500" width="2.800" height="11" rx="0.700"/></g></svg>
<svg class="abs" style="left:173.2px;top:464.5px;" width="14" height="16" viewBox="0 0 14 16" fill="none"><g fill="none" stroke="#6c707e" stroke-width="1.200" stroke-linecap="round" stroke-linejoin="round"><path d="M1.200 9.800L6.500 4.300l6 5.200"/><path d="M12.700 4.800v4.900H8" /><path d="M1.200 14.800h11.600"/></g></svg>
<svg class="abs" style="left:199.0px;top:464.5px;" width="14" height="16" viewBox="0 0 14 16" fill="none"><g fill="none" stroke="#6c707e" stroke-width="1.200" stroke-linecap="round" stroke-linejoin="round"><path d="M7 1.700v9.500M3 7.400l4 4 4-4"/><path d="M1.200 14.800h11.600"/></g></svg>
<svg class="abs" style="left:225.0px;top:464.5px;" width="14" height="16" viewBox="0 0 14 16" fill="none"><g fill="none" stroke="#6c707e" stroke-width="1.200" stroke-linecap="round" stroke-linejoin="round"><path d="M7 11.600V2.200M3 6.100l4-4 4 4"/><path d="M1.200 14.800h11.600"/></g></svg>
<div class="abs" style="left:248px;top:463.5px;width:1px;height:18px;background:#dfe1e5;"></div>
<svg class="abs" style="left:257.0px;top:464.5px;" width="16" height="16" viewBox="0 0 16 16" fill="none"><g fill="none" stroke="#db3b4b" stroke-width="1.200"><circle cx="10" cy="6" r="4.700"/><circle cx="6" cy="10" r="4.700" fill="#fff4f4"/></g></svg>
<svg class="abs" style="left:283.0px;top:464.5px;" width="16" height="16" viewBox="0 0 16 16" fill="none"><circle cx="8" cy="8" r="5.500" fill="none" stroke="#db3b4b" stroke-width="1.200"/><path d="M2 14.500L14 1.500" stroke="#f7f8fa" stroke-width="3.200"/><path d="M2.200 14.300L13.800 1.700" stroke="#6c707e" stroke-width="1.200" stroke-linecap="round"/></svg>
<div class="abs" style="left:315.6px;top:466.4px;width:2.2px;height:2.2px;background:#6c707e;border-radius:50%;"></div>
<div class="abs" style="left:315.6px;top:471.4px;width:2.2px;height:2.2px;background:#6c707e;border-radius:50%;"></div>
<div class="abs" style="left:315.6px;top:476.4px;width:2.2px;height:2.2px;background:#6c707e;border-radius:50%;"></div>
<svg class="abs" style="left:355px;top:477.74px;" width="65.0" height="1" viewBox="0 0 65.0 1"><text x="0" y="0" font-size="13" fill="#000">线程和变量</text></svg>
<svg class="abs" style="left:444.6px;top:477.74px;" width="39.0" height="1" viewBox="0 0 39.0 1"><text x="0" y="0" font-size="13" fill="#000">控制台</text></svg>
<svg class="abs" style="left:1329.0px;top:466.0px;" width="14" height="14" viewBox="0 0 14 14" fill="none"><g fill="none" stroke="#6c707e" stroke-width="1.200"><rect x="1.200" y="1.200" width="11.600" height="11.600" rx="1.800"/><path d="M5.200 1.200v11.600M5.200 6.800h7.600"/></g></svg>
<div class="abs" style="left:49px;top:490px;width:1298px;height:1px;background:#ebecf0;"></div>
<div class="abs" style="left:104px;top:491px;width:1243px;height:33px;background:#fff;"></div>
<div class="abs" style="left:342px;top:488px;width:91px;height:3px;background:#3574f0;border-radius:1.500px;"></div>
<div class="abs" style="left:49px;top:524px;width:1298px;height:1px;background:#ebecf0;"></div>
<div class="abs" style="left:103px;top:491px;width:1px;height:270px;background:#ebecf0;"></div>
<svg class="abs" style="left:53.8px;top:503.0px;" width="6" height="9" viewBox="0 0 6 9" fill="none"><path d="M0.900 0.700l3.900 3.800-3.900 3.800" stroke="#8d909c" stroke-width="1.150" stroke-linecap="round" stroke-linejoin="round"/></svg>
<svg class="abs" style="left:81.1px;top:505.0px;" width="9" height="6" viewBox="0 0 9 6" fill="none"><path d="M0.700 0.900l3.800 3.900 3.800-3.900" stroke="#8d909c" stroke-width="1.150" stroke-linecap="round" stroke-linejoin="round"/></svg>
<svg class="abs" style="left:115.2px;top:512.24px;" width="79.0" height="1" viewBox="0 0 79.0 1"><text x="0" y="0" font-size="13" fill="#8c8c8c">对表达式求值</text></svg>
<div class="t mono" style="left:194.2px;top:499.0px;height:17px;line-height:17px;color:#9094a6;font-size:13px;letter-spacing:-0.2px;">(Enter)</div>
<svg class="abs" style="left:247.5px;top:512.24px;" width="66.5" height="1" viewBox="0 0 66.5 1"><text x="0" y="0" font-size="13" fill="#8c8c8c">或添加监视</text></svg>
<div class="t mono" style="left:314.2px;top:499.0px;height:17px;line-height:17px;color:#9094a6;font-size:13px;letter-spacing:0.07px;">(Ctrl+Shift+Enter)</div>
<svg class="abs" style="left:1289.0px;top:499.5px;" width="16" height="16" viewBox="0 0 16 16" fill="none"><g fill="none" stroke="#adb0bb" stroke-width="1.100" stroke-linecap="round"><path d="M7.600 0.900v8.200M1.200 6.900h12.800"/><circle cx="7.300" cy="13" r="2"/><circle cx="13.700" cy="13" r="2"/><path d="M9.300 12.600c.7-.5 1.700-.5 2.400 0"/></g></svg>
<svg class="abs" style="left:1325.5px;top:505.2px;" width="9" height="6" viewBox="0 0 9 6" fill="none"><path d="M0.800 1l3.700 3.700L8.200 1" stroke="#6c707e" stroke-width="1.300" stroke-linecap="round" stroke-linejoin="round" fill="none"/></svg>
<div class="abs" style="left:49px;top:525px;width:54px;height:236px;background:#fdf3da;"></div>
<div class="abs" style="left:57px;top:528.5px;width:46px;height:23.5px;background:#dfe1e5;border-radius:5px 0 0 5px;"></div>
<svg class="abs" style="left:65.5px;top:534.5px;" width="12" height="11" viewBox="0 0 12 11" fill="none"><g fill="none" stroke="#6c707e" stroke-width="1.100" stroke-linecap="round" stroke-linejoin="round"><path d="M4.200 1.200L1.200 4.200l3 3"/><path d="M1.500 4.200h6a3.200 3.200 0 0 1 0 6.400H5"/></g></svg>
<div class="abs" style="left:49px;top:525px;width:54px;height:236px;overflow:hidden">
<div class="t ui" style="left:35px;top:7.8px;height:16px;line-height:16px;color:#000;letter-spacing:0.300px;">ser</div>
<div class="t ui" style="left:35px;top:31.8px;height:16px;line-height:16px;color:#818594;letter-spacing:0.300px;">har</div>
<div class="t ui" style="left:35px;top:55.8px;height:16px;line-height:16px;color:#818594;letter-spacing:0.300px;">run</div>
<div class="t ui" style="left:35px;top:79.8px;height:16px;line-height:16px;color:#818594;letter-spacing:0.300px;">lam</div>
<div class="t ui" style="left:35px;top:103.8px;height:16px;line-height:16px;color:#818594;letter-spacing:0.300px;">run</div>
<div class="t ui" style="left:35px;top:127.8px;height:16px;line-height:16px;color:#818594;letter-spacing:0.300px;">doI</div>
<div class="t ui" style="left:35px;top:151.8px;height:16px;line-height:16px;color:#818594;letter-spacing:0.300px;">run</div>
<div class="t ui" style="left:35px;top:175.8px;height:16px;line-height:16px;color:#818594;letter-spacing:0.300px;">run</div>
<div class="t ui" style="left:35px;top:199.8px;height:16px;line-height:16px;color:#818594;letter-spacing:0.300px;">run</div>
<div class="t ui" style="left:35px;top:223.8px;height:16px;line-height:16px;color:#818594;letter-spacing:0.300px;">run</div>
</div>
<div class="abs" style="left:93px;top:525px;width:10px;height:216px;background:rgba(130,130,130,0.40);"></div>
<div class="abs" style="left:49px;top:752px;width:28px;height:9px;background:rgba(130,130,130,0.30);"></div>
<div class="abs" style="left:49px;top:761px;width:55px;height:1px;background:#ebecf0;"></div>
<svg class="abs" style="left:58px;top:777.86px;" width="12.0" height="1" viewBox="0 0 12.0 1"><text x="0" y="0" font-size="12" fill="#818594">使</text></svg>
<div class="t ui" style="left:70.5px;top:765.8px;height:16px;line-height:16px;color:#818594;font-size:12px;">...</div>
<svg class="abs" style="left:87.0px;top:769.5px;" width="8" height="8" viewBox="0 0 8 8" fill="none"><path d="M.5.500l7 7M7.500.500l-7 7" stroke="#818594" stroke-width="1.100"/></svg>
<div class="abs" style="left:116px;top:597px;width:1205px;height:24px;background:#d4e2ff;border-radius:5px;"></div>
<div class="abs" style="left:104px;top:525px;width:1243px;height:259px;overflow:hidden"><div class="abs" style="left:-104px;top:-525px;width:1396px;height:823px">
<svg class="abs" style="left:139.3px;top:532.5px;" width="6" height="9" viewBox="0 0 6 9" fill="none"><path d="M0.900 0.700l3.900 3.800-3.900 3.800" stroke="#8d909c" stroke-width="1.150" stroke-linecap="round" stroke-linejoin="round"/></svg>
<svg class="abs" style="left:156.0px;top:528.9px;" width="16" height="16" viewBox="0 0 16 16" fill="none"><circle cx="8" cy="8" r="6.550" stroke="#e8833a" fill="#fdf0e6" stroke-width="1.150"/><path d="M10.200 4.600c-1.700-.6-2.500.1-2.500 1.500v6M5.900 7.300h3.800" stroke="#e8833a" stroke-width="1.200" stroke-linecap="round" fill="none"/><ellipse cx="3.200" cy="2.900" rx="4.200" ry="2.700" transform="rotate(-42 3.200 2.900)" fill="#f7f8fa"/><path d="M4.400 4.600l2 1.800" stroke="#f7f8fa" stroke-width="2.600"/><path d="M4.600 4.700l1.700 1.600" stroke="#7a7e8a" stroke-width="1.100" stroke-linecap="round"/><ellipse cx="3.200" cy="2.900" rx="3.200" ry="1.800" transform="rotate(-42 3.200 2.900)" fill="#eceef1" stroke="#7a7e8a" stroke-width="1.100"/></svg>
<div class="t ui" style="left:175.2px;top:529.6px;height:16px;line-height:16px;color:#7a2a37;font-size:13.5px;letter-spacing:-0.104px;">id</div>
<div class="t ui" style="left:191.3px;top:529.8px;height:16px;line-height:16px;color:#000;">=</div>
<div class="t ui" style="left:204.7px;top:529.6px;height:16px;line-height:16px;color:#8c8c8c;font-size:13.5px;letter-spacing:0.070px;">{ObjID@1071}</div>
<div class="t ui" style="left:299.4px;top:529.6px;height:16px;line-height:16px;color:#2a5bc0;font-size:13.5px;letter-spacing:0.141px;">... toString()</div>
<svg class="abs" style="left:156.0px;top:552.9px;" width="16" height="16" viewBox="0 0 16 16" fill="none"><circle cx="8" cy="8" r="6.550" stroke="#e8833a" fill="#fdf0e6" stroke-width="1.150"/><path d="M10.200 4.600c-1.700-.6-2.500.1-2.500 1.500v6M5.900 7.300h3.800" stroke="#e8833a" stroke-width="1.200" stroke-linecap="round" fill="none"/><ellipse cx="3.200" cy="2.900" rx="4.200" ry="2.700" transform="rotate(-42 3.200 2.900)" fill="#f7f8fa"/><path d="M4.400 4.600l2 1.800" stroke="#f7f8fa" stroke-width="2.600"/><path d="M4.600 4.700l1.700 1.600" stroke="#7a7e8a" stroke-width="1.100" stroke-linecap="round"/><ellipse cx="3.200" cy="2.900" rx="3.200" ry="1.800" transform="rotate(-42 3.200 2.900)" fill="#eceef1" stroke="#7a7e8a" stroke-width="1.100"/></svg>
<div class="t ui" style="left:175.2px;top:553.6px;height:16px;line-height:16px;color:#7a2a37;font-size:13.5px;letter-spacing:0.184px;">permanent</div>
<div class="t ui" style="left:247.9px;top:553.8px;height:16px;line-height:16px;color:#000;">=</div>
<div class="t ui" style="left:260.1px;top:553.6px;height:16px;line-height:16px;color:#000;font-size:13.5px;letter-spacing:0.359px;">true</div>
<svg class="abs" style="left:139.3px;top:580.5px;" width="6" height="9" viewBox="0 0 6 9" fill="none"><path d="M0.900 0.700l3.900 3.800-3.900 3.800" stroke="#8d909c" stroke-width="1.150" stroke-linecap="round" stroke-linejoin="round"/></svg>
<svg class="abs" style="left:156.0px;top:576.9px;" width="16" height="16" viewBox="0 0 16 16" fill="none"><circle cx="8" cy="8" r="6.550" stroke="#e8833a" fill="#fdf0e6" stroke-width="1.150"/><path d="M10.200 4.600c-1.700-.6-2.500.1-2.500 1.500v6M5.900 7.300h3.800" stroke="#e8833a" stroke-width="1.200" stroke-linecap="round" fill="none"/><ellipse cx="3.200" cy="2.900" rx="4.200" ry="2.700" transform="rotate(-42 3.200 2.900)" fill="#f7f8fa"/><path d="M4.400 4.600l2 1.800" stroke="#f7f8fa" stroke-width="2.600"/><path d="M4.600 4.700l1.700 1.600" stroke="#7a7e8a" stroke-width="1.100" stroke-linecap="round"/><ellipse cx="3.200" cy="2.900" rx="3.200" ry="1.800" transform="rotate(-42 3.200 2.900)" fill="#eceef1" stroke="#7a7e8a" stroke-width="1.100"/></svg>
<div class="t ui" style="left:175.2px;top:577.6px;height:16px;line-height:16px;color:#7a2a37;font-size:13.5px;letter-spacing:0.047px;">weakImpl</div>
<div class="t ui" style="left:238.6px;top:577.8px;height:16px;line-height:16px;color:#000;">=</div>
<div class="t ui" style="left:251.5px;top:577.6px;height:16px;line-height:16px;color:#8c8c8c;font-size:13.5px;letter-spacing:-0.116px;">{WeakRef@1072}</div>
<svg class="abs" style="left:137.8px;top:606.5px;" width="9" height="6" viewBox="0 0 9 6" fill="none"><path d="M0.700 0.900l3.800 3.900 3.800-3.900" stroke="#8d909c" stroke-width="1.150" stroke-linecap="round" stroke-linejoin="round"/></svg>
<svg class="abs" style="left:156.0px;top:600.9px;" width="16" height="16" viewBox="0 0 16 16" fill="none"><circle cx="8" cy="8" r="6.550" stroke="#e8833a" fill="#fdf0e6" stroke-width="1.150"/><path d="M10.200 4.600c-1.700-.6-2.500.1-2.500 1.500v6M5.900 7.300h3.800" stroke="#e8833a" stroke-width="1.200" stroke-linecap="round" fill="none"/></svg>
<div class="t ui" style="left:175.2px;top:601.6px;height:16px;line-height:16px;color:#7a2a37;font-size:13.5px;letter-spacing:-0.192px;">disp</div>
<div class="t ui" style="left:205.7px;top:601.8px;height:16px;line-height:16px;color:#000;">=</div>
<div class="t ui" style="left:218.2px;top:601.6px;height:16px;line-height:16px;color:#8c8c8c;font-size:13.5px;letter-spacing:-0.061px;">{UnicastServerRef@878}</div>
<svg class="abs" style="left:175.2px;top:624.9px;" width="16" height="16" viewBox="0 0 16 16" fill="none"><circle cx="8" cy="8" r="6.550" stroke="#e8833a" fill="#fdf0e6" stroke-width="1.150"/><path d="M10.200 4.600c-1.700-.6-2.500.1-2.500 1.500v6M5.900 7.300h3.800" stroke="#e8833a" stroke-width="1.200" stroke-linecap="round" fill="none"/></svg>
<div class="t ui" style="left:194.2px;top:625.6px;height:16px;line-height:16px;color:#7a2a37;font-size:13.5px;letter-spacing:0.109px;">forceStubUse</div>
<div class="t ui" style="left:283.7px;top:625.8px;height:16px;line-height:16px;color:#000;">=</div>
<div class="t ui" style="left:296.3px;top:625.6px;height:16px;line-height:16px;color:#000;font-size:13.5px;letter-spacing:-0.183px;">false</div>
<svg class="abs" style="left:158.5px;top:652.5px;" width="6" height="9" viewBox="0 0 6 9" fill="none"><path d="M0.900 0.700l3.900 3.800-3.900 3.800" stroke="#8d909c" stroke-width="1.150" stroke-linecap="round" stroke-linejoin="round"/></svg>
<svg class="abs" style="left:175.2px;top:648.9px;" width="16" height="16" viewBox="0 0 16 16" fill="none"><circle cx="8" cy="8" r="6.550" stroke="#e8833a" fill="#fdf0e6" stroke-width="1.150"/><path d="M10.200 4.600c-1.700-.6-2.500.1-2.500 1.500v6M5.900 7.300h3.800" stroke="#e8833a" stroke-width="1.200" stroke-linecap="round" fill="none"/></svg>
<div class="t ui" style="left:194.2px;top:649.6px;height:16px;line-height:16px;color:#7a2a37;font-size:13.5px;letter-spacing:-0.452px;">skel</div>
<div class="t ui" style="left:222.9px;top:649.8px;height:16px;line-height:16px;color:#000;">=</div>
<div class="t ui" style="left:235px;top:649.6px;height:16px;line-height:16px;color:#8c8c8c;font-size:13.5px;letter-spacing:-0.073px;">{RegistryImpl_Skel@1077}</div>
<svg class="abs" style="left:158.5px;top:676.5px;" width="6" height="9" viewBox="0 0 6 9" fill="none"><path d="M0.900 0.700l3.900 3.800-3.900 3.800" stroke="#8d909c" stroke-width="1.150" stroke-linecap="round" stroke-linejoin="round"/></svg>
<svg class="abs" style="left:175.2px;top:672.9px;" width="16" height="16" viewBox="0 0 16 16" fill="none"><circle cx="8" cy="8" r="6.550" stroke="#e8833a" fill="#fdf0e6" stroke-width="1.150"/><path d="M10.200 4.600c-1.700-.6-2.500.1-2.500 1.500v6M5.900 7.300h3.800" stroke="#e8833a" stroke-width="1.200" stroke-linecap="round" fill="none"/></svg>
<div class="t ui" style="left:194.2px;top:673.6px;height:16px;line-height:16px;color:#7a2a37;font-size:13.5px;letter-spacing:0.235px;">hashToMethod_Map</div>
<div class="t ui" style="left:326.7px;top:673.8px;height:16px;line-height:16px;color:#000;">=</div>
<div class="t ui" style="left:338.9px;top:673.6px;height:16px;line-height:16px;color:#8c8c8c;font-size:13.5px;letter-spacing:0.112px;">{HashMap@1078}</div>
<div class="t ui" style="left:459.2px;top:673.6px;height:16px;line-height:16px;color:#000;font-size:13.5px;letter-spacing:0.050px;">size = 5</div>
<svg class="abs" style="left:158.5px;top:700.5px;" width="6" height="9" viewBox="0 0 6 9" fill="none"><path d="M0.900 0.700l3.900 3.800-3.900 3.800" stroke="#8d909c" stroke-width="1.150" stroke-linecap="round" stroke-linejoin="round"/></svg>
<svg class="abs" style="left:175.2px;top:696.9px;" width="16" height="16" viewBox="0 0 16 16" fill="none"><circle cx="8" cy="8" r="6.550" stroke="#e8833a" fill="#fdf0e6" stroke-width="1.150"/><path d="M10.200 4.600c-1.700-.6-2.500.1-2.500 1.500v6M5.900 7.300h3.800" stroke="#e8833a" stroke-width="1.200" stroke-linecap="round" fill="none"/></svg>
<div class="t ui" style="left:194.2px;top:697.6px;height:16px;line-height:16px;color:#7a2a37;font-size:13.5px;letter-spacing:0.115px;">ref</div>
<div class="t ui" style="left:216.4px;top:697.8px;height:16px;line-height:16px;color:#000;">=</div>
<div class="t ui" style="left:228.9px;top:697.6px;height:16px;line-height:16px;color:#8c8c8c;font-size:13.5px;letter-spacing:-0.074px;">{LiveRef@1079}</div>
<div class="t ui" style="left:332.8px;top:697.6px;height:16px;line-height:16px;color:#2a5bc0;font-size:13.5px;letter-spacing:0.134px;">... toString()</div>
<svg class="abs" style="left:139.3px;top:724.5px;" width="6" height="9" viewBox="0 0 6 9" fill="none"><path d="M0.900 0.700l3.900 3.800-3.900 3.800" stroke="#8d909c" stroke-width="1.150" stroke-linecap="round" stroke-linejoin="round"/></svg>
<svg class="abs" style="left:156.0px;top:720.9px;" width="16" height="16" viewBox="0 0 16 16" fill="none"><circle cx="8" cy="8" r="6.550" stroke="#e8833a" fill="#fdf0e6" stroke-width="1.150"/><path d="M10.200 4.600c-1.700-.6-2.500.1-2.500 1.500v6M5.900 7.300h3.800" stroke="#e8833a" stroke-width="1.200" stroke-linecap="round" fill="none"/><ellipse cx="3.200" cy="2.900" rx="4.200" ry="2.700" transform="rotate(-42 3.200 2.900)" fill="#f7f8fa"/><path d="M4.400 4.600l2 1.800" stroke="#f7f8fa" stroke-width="2.600"/><path d="M4.600 4.700l1.700 1.600" stroke="#7a7e8a" stroke-width="1.100" stroke-linecap="round"/><ellipse cx="3.200" cy="2.900" rx="3.200" ry="1.800" transform="rotate(-42 3.200 2.900)" fill="#eceef1" stroke="#7a7e8a" stroke-width="1.100"/></svg>
<div class="t ui" style="left:175.2px;top:721.6px;height:16px;line-height:16px;color:#7a2a37;font-size:13.5px;letter-spacing:0.171px;">stub</div>
<div class="t ui" style="left:207.4px;top:721.8px;height:16px;line-height:16px;color:#000;">=</div>
<div class="t ui" style="left:220px;top:721.6px;height:16px;line-height:16px;color:#8c8c8c;font-size:13.5px;letter-spacing:0.039px;">{RegistryImpl_Stub@1073}</div>
<div class="t ui" style="left:390.1px;top:721.6px;height:16px;line-height:16px;color:#2a5bc0;font-size:13.5px;letter-spacing:0.156px;">... toString()</div>
<svg class="abs" style="left:156.0px;top:744.9px;" width="16" height="16" viewBox="0 0 16 16" fill="none"><circle cx="8" cy="8" r="6.550" stroke="#e8833a" fill="#fdf0e6" stroke-width="1.150"/><path d="M10.200 4.600c-1.700-.6-2.500.1-2.500 1.500v6M5.900 7.300h3.800" stroke="#e8833a" stroke-width="1.200" stroke-linecap="round" fill="none"/><ellipse cx="3.200" cy="2.900" rx="4.200" ry="2.700" transform="rotate(-42 3.200 2.900)" fill="#f7f8fa"/><path d="M4.400 4.600l2 1.800" stroke="#f7f8fa" stroke-width="2.600"/><path d="M4.600 4.700l1.700 1.600" stroke="#7a7e8a" stroke-width="1.100" stroke-linecap="round"/><ellipse cx="3.200" cy="2.900" rx="3.200" ry="1.800" transform="rotate(-42 3.200 2.900)" fill="#eceef1" stroke="#7a7e8a" stroke-width="1.100"/></svg>
<div class="t ui" style="left:175.2px;top:745.6px;height:16px;line-height:16px;color:#7a2a37;font-size:13.5px;letter-spacing:0.080px;">refSet</div>
<div class="t ui" style="left:218.2px;top:745.8px;height:16px;line-height:16px;color:#000;">=</div>
<div class="t ui" style="left:230px;top:745.6px;height:16px;line-height:16px;color:#8c8c8c;font-size:13.5px;letter-spacing:0.221px;">{Vector@1074}</div>
<div class="t ui" style="left:332.1px;top:745.6px;height:16px;line-height:16px;color:#000;font-size:13.5px;letter-spacing:0.050px;">size = 0</div>
<svg class="abs" style="left:156.0px;top:768.9px;" width="16" height="16" viewBox="0 0 16 16" fill="none"><circle cx="8" cy="8" r="6.550" stroke="#e8833a" fill="#fdf0e6" stroke-width="1.150"/><path d="M10.200 4.600c-1.700-.6-2.500.1-2.500 1.500v6M5.900 7.300h3.800" stroke="#e8833a" stroke-width="1.200" stroke-linecap="round" fill="none"/><ellipse cx="3.200" cy="2.900" rx="4.200" ry="2.700" transform="rotate(-42 3.200 2.900)" fill="#f7f8fa"/><path d="M4.400 4.600l2 1.800" stroke="#f7f8fa" stroke-width="2.600"/><path d="M4.600 4.700l1.700 1.600" stroke="#7a7e8a" stroke-width="1.100" stroke-linecap="round"/><ellipse cx="3.200" cy="2.900" rx="3.200" ry="1.800" transform="rotate(-42 3.200 2.900)" fill="#eceef1" stroke="#7a7e8a" stroke-width="1.100"/></svg>
<div class="t ui" style="left:175.2px;top:769.6px;height:16px;line-height:16px;color:#7a2a37;font-size:13.5px;letter-spacing:-0.094px;">sequenceTable</div>
<div class="t ui" style="left:271.2px;top:769.8px;height:16px;line-height:16px;color:#000;">=</div>
<div class="t ui" style="left:283.4px;top:769.6px;height:16px;line-height:16px;color:#8c8c8c;font-size:13.5px;letter-spacing:-0.003px;">{Hashtable@1075}</div>
<div class="t ui" style="left:405.2px;top:769.6px;height:16px;line-height:16px;color:#000;font-size:13.5px;letter-spacing:0.087px;">size = 0</div>
</div></div>
<div class="abs" style="left:1337px;top:610px;width:10px;height:117px;background:rgba(140,140,140,0.28);"></div>
<!-- s_status -->
<div class="abs" style="left:8px;top:784px;width:1380px;height:1px;background:#ebecf0;"></div>
<div class="abs" style="left:22px;top:795.5px;width:7px;height:7px;background:#e7efff;border:1.200px solid #3574f0;border-radius:1.500px;"></div>
<div class="t ui" style="left:34px;top:791.6px;height:16px;line-height:16px;color:#6c707e;font-size:13.5px;letter-spacing:0.000px;">D:</div>
<svg class="abs" style="left:56.5px;top:795.3px;" width="5" height="9" viewBox="0 0 5 9" fill="none"><path d="M.8.800l3.600 3.700-3.600 3.700" stroke="#9397a3" stroke-width="1.100" fill="none"/></svg>
<div class="t ui" style="left:70.5px;top:791.6px;height:16px;line-height:16px;color:#6c707e;font-size:13.5px;letter-spacing:-0.028px;">jdk1.8.0_65</div>
<svg class="abs" style="left:150.0px;top:795.3px;" width="5" height="9" viewBox="0 0 5 9" fill="none"><path d="M.8.800l3.600 3.700-3.600 3.700" stroke="#9397a3" stroke-width="1.100" fill="none"/></svg>
<div class="t ui" style="left:164.5px;top:791.6px;height:16px;line-height:16px;color:#6c707e;font-size:13.5px;letter-spacing:0.001px;">src</div>
<svg class="abs" style="left:191.5px;top:795.3px;" width="5" height="9" viewBox="0 0 5 9" fill="none"><path d="M.8.800l3.600 3.700-3.600 3.700" stroke="#9397a3" stroke-width="1.100" fill="none"/></svg>
<div class="t ui" style="left:206.5px;top:791.6px;height:16px;line-height:16px;color:#6c707e;font-size:13.5px;letter-spacing:0.078px;">sun</div>
<svg class="abs" style="left:238.0px;top:795.3px;" width="5" height="9" viewBox="0 0 5 9" fill="none"><path d="M.8.800l3.600 3.700-3.600 3.700" stroke="#9397a3" stroke-width="1.100" fill="none"/></svg>
<div class="t ui" style="left:252.5px;top:791.6px;height:16px;line-height:16px;color:#6c707e;font-size:13.5px;letter-spacing:0.253px;">rmi</div>
<svg class="abs" style="left:282.0px;top:795.3px;" width="5" height="9" viewBox="0 0 5 9" fill="none"><path d="M.8.800l3.600 3.700-3.600 3.700" stroke="#9397a3" stroke-width="1.100" fill="none"/></svg>
<div class="t ui" style="left:296.5px;top:791.6px;height:16px;line-height:16px;color:#6c707e;font-size:13.5px;letter-spacing:0.414px;">transport</div>
<svg class="abs" style="left:362.5px;top:795.3px;" width="5" height="9" viewBox="0 0 5 9" fill="none"><path d="M.8.800l3.600 3.700-3.600 3.700" stroke="#9397a3" stroke-width="1.100" fill="none"/></svg>
<svg class="abs" style="left:377.5px;top:792.3px;" width="15" height="15" viewBox="0 0 15 15" fill="none"><circle cx="7.500" cy="7.500" r="6.500" stroke="#3574f0" fill="#edf3ff" stroke-width="1.100" stroke-dasharray="3.300 1.800"/><path d="M10 5.600a3.100 3.100 0 1 0 0 3.800" stroke="#3574f0" stroke-width="1.100" stroke-linecap="round" fill="none"/><ellipse cx="2.800" cy="2.300" rx="3.300" ry="2" transform="rotate(-35 2.800 2.300)" fill="#e6e7ea" stroke="#8a8d96" stroke-width="1"/></svg>
<div class="t ui" style="left:398px;top:791.6px;height:16px;line-height:16px;color:#6c707e;font-size:13.5px;letter-spacing:0.192px;">Transport</div>
<div class="t ui" style="left:1149.5px;top:791.6px;height:16px;line-height:16px;color:#6c707e;font-size:13.5px;letter-spacing:0.043px;">176:1</div>
<div class="t ui" style="left:1200px;top:791.6px;height:16px;line-height:16px;color:#6c707e;font-size:13.5px;letter-spacing:-1.127px;">LF</div>
<div class="t ui" style="left:1230px;top:791.6px;height:16px;line-height:16px;color:#6c707e;font-size:13.5px;letter-spacing:-0.049px;">UTF-8</div>
<div class="t ui" style="left:1288px;top:791.8px;height:16px;line-height:16px;color:#6c707e;">4</div>
<svg class="abs" style="left:1299px;top:804.44px;" width="26.0" height="1" viewBox="0 0 26.0 1"><text x="0" y="0" font-size="13" fill="#6c707e">个空</text></svg>
<div class="t ui" style="left:1325.5px;top:791.8px;height:16px;line-height:16px;color:#6c707e;letter-spacing:-0.500px;">...</div>
<svg class="abs" style="left:1356.0px;top:793.0px;" width="14" height="13" viewBox="0 0 14 13" fill="none"><g stroke="#6c707e" stroke-width="1.200" fill="none" stroke-linecap="round"><rect x="1" y="5.500" width="9" height="6.500" rx="1.300"/><path d="M8 5.500V3.800a2.300 2.300 0 0 1 4.600 0v1"/></g><circle cx="5.500" cy="8.800" r="0.900" fill="#6c707e"/></svg>
<!-- s_overlay -->
<div class="abs" style="left:626px;top:313px;width:52px;height:31px;background:transparent;border:3px solid #f8323a;"></div>
<div class="abs" style="left:117px;top:596px;width:460px;height:121px;background:transparent;border:3px solid #f8323a;"></div>
<svg class="abs" style="left:0;top:0" width="1396" height="823" viewBox="0 0 1396 823"><path d="M617.37 358.37 L384.17 584.44 L383.65 580.19 L378.00 593.00 L390.93 587.62 L386.69 587.01 L617.63 358.63Z" fill="#f8323a"/></svg>
</body></html>
